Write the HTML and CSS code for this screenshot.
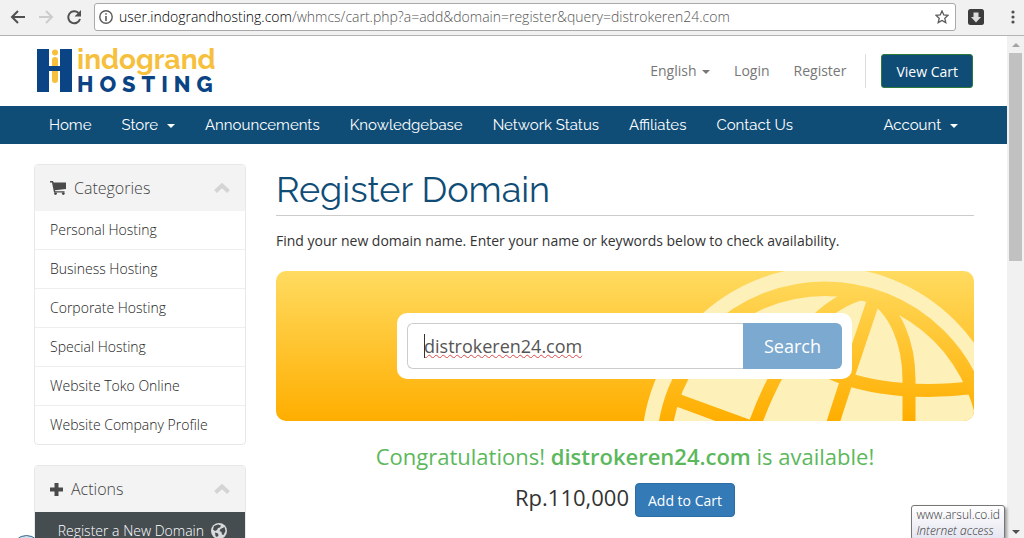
FILE: index.html
```html
<!DOCTYPE html>
<html lang="en">
<head>
    <meta charset="UTF-8">
    <meta name="viewport" content="width=device-width, initial-scale=1.0">
    <title>Register Domain - Indogrand Hosting</title>
    <link rel="stylesheet" href="styles.css">
</head>
<body>
<div class="toolbar">
    <button class="tool-button" aria-label="Back">
        <svg width="16" height="16" viewBox="0 0 16 16" fill="none" stroke="#505050" stroke-width="2"><path d="M15 8H2M8 2L2 8l6 6"/></svg>
    </button>
    <button class="tool-button" aria-label="Forward" disabled>
        <svg width="16" height="16" viewBox="0 0 16 16" fill="none" stroke="#cccccc" stroke-width="2"><path d="M1 8h13M8 2l6 6-6 6"/></svg>
    </button>
    <button class="tool-button" aria-label="Reload">
        <svg width="16" height="16" viewBox="0 0 16 16"><path d="M12.500 4A6 6 0 1 0 14 10" fill="none" stroke="#505050" stroke-width="2"/><path d="M15 1v6.500H8.500z" fill="#505050"/></svg>
    </button>
    <div class="address-bar">
        <svg width="14" height="14" viewBox="0 0 14 14"><circle cx="7" cy="7" r="6.200" fill="none" stroke="#5a5a5a" stroke-width="1.400"/><path d="M6.200 3.200h1.600v1.600H6.200zM6.200 6h1.600v5H6.200z" fill="#5a5a5a"/></svg>
        <div class="url" role="textbox" aria-label="Address" tabindex="0"><span class="url-host">user.indograndhosting.com</span>/whmcs/cart.php?a=add&amp;domain=register&amp;query=distrokeren24.com</div>
        <button class="star-button" aria-label="Bookmark">
            <svg width="14" height="14" viewBox="0 0 14 14" fill="none" stroke="#5a5a5a" stroke-width="1.300"><path d="M7 1l1.800 4 4.200.4-3.200 2.900 1 4.300L7 10.400l-3.800 2.200 1-4.300L1 5.400 5.200 5z"/></svg>
        </button>
    </div>
    <button class="tool-button" aria-label="Downloads">
        <svg width="16" height="16" viewBox="0 0 16 16"><rect width="16" height="16" rx="2.500" fill="#3c3c3c"/><path d="M5.500 3.500h5V8H13l-5 5.500L3 8h2.500z" fill="#dcdcdc"/></svg>
    </button>
    <button class="tool-button menu-button" aria-label="Menu">
        <svg width="4" height="14" viewBox="0 0 4 14" fill="#505050"><circle cx="2" cy="2" r="1.600"/><circle cx="2" cy="7" r="1.600"/><circle cx="2" cy="12" r="1.600"/></svg>
    </button>
</div>

<div class="window">
    <div class="page">
        <header class="header">
            <a class="logo" href="#" aria-label="Indogrand Hosting">
                <svg width="184" height="50" viewBox="0 0 184 50">
                    <path d="M0 3h12v17h11V3h12v43H23V25H12v21H0z" fill="#0b4484"/>
                    <circle cx="18" cy="6.500" r="3" fill="#f6c03c"/>
                    <path d="M15 20v-6a3 3 0 0 1 6 0v6zM15 25h6v9a3 3 0 0 1-6 0z" fill="#f6c03c"/>
                    <text class="logo-top" x="40" y="23">indogrand</text>
                    <text class="logo-bottom" x="40" y="46">HOSTING</text>
                </svg>
            </a>
            <div class="top-links">
                <a href="#">English <span class="caret"></span></a>
                <a href="#">Login</a>
                <a href="#">Register</a>
                <div class="cart-box">
                    <button class="view-cart">View Cart</button>
                </div>
            </div>
        </header>

        <nav class="navbar">
            <a href="#">Home</a>
            <a href="#">Store <span class="caret"></span></a>
            <a href="#">Announcements</a>
            <a href="#">Knowledgebase</a>
            <a href="#">Network Status</a>
            <a href="#">Affiliates</a>
            <a href="#">Contact Us</a>
            <a class="account" href="#">Account <span class="caret"></span></a>
        </nav>

        <div class="content">
            <aside class="sidebar">
                <section class="panel">
                    <h3 class="panel-heading">
                        <svg width="16" height="14" viewBox="0 0 16 14" fill="#4a4a4a"><path d="M0 0h3l.6 1.500H16V8L5 9.300l.2 1H14.500v1.200H4L2 1.500H0z"/><circle cx="5.500" cy="12.600" r="1.400"/><circle cx="13.300" cy="12.600" r="1.400"/></svg>
                        Categories
                        <svg class="chevron" width="16" height="10" viewBox="0 0 16 10" fill="none" stroke="#d4d4d4" stroke-width="4"><path d="M1.500 8.500L8 2.500l6.500 6"/></svg>
                    </h3>
                    <ul class="panel-list">
                        <li><a href="#">Personal Hosting</a></li>
                        <li><a href="#">Business Hosting</a></li>
                        <li><a href="#">Corporate Hosting</a></li>
                        <li><a href="#">Special Hosting</a></li>
                        <li><a href="#">Website Toko Online</a></li>
                        <li><a href="#">Website Company Profile</a></li>
                    </ul>
                </section>
                <section class="panel">
                    <h3 class="panel-heading">
                        <svg width="13" height="13" viewBox="0 0 13 13" fill="#4a4a4a"><path d="M4.500 0h4v4.500H13v4H8.500V13h-4V8.500H0v-4h4.500z"/></svg>
                        Actions
                        <svg class="chevron" width="16" height="10" viewBox="0 0 16 10" fill="none" stroke="#d4d4d4" stroke-width="4"><path d="M1.500 8.500L8 2.500l6.500 6"/></svg>
                    </h3>
                    <a class="action" href="#">
                        Register a New Domain
                        <svg width="16" height="16" viewBox="0 0 16 16"><circle cx="8" cy="8" r="8" fill="#d8dadb"/><path d="M3 3l4-1.500 3 1-1 2-2 .5-1 2-2 1-2-1.500zM9.500 6l4-2 1 4-2 4-1.500-.5-.5-2.500-2-1zM4 9.500l3 1 .5 2L6 14l-1.500-1z" fill="#454d51"/></svg>
                    </a>
                </section>
            </aside>

            <main class="main">
                <h1>Register Domain</h1>
                <p class="lead">Find your new domain name. Enter your name or keywords below to check availability.</p>

                <div class="banner">
                    <svg class="globe" width="331" height="150" viewBox="643 271 331 150" aria-hidden="true">
                        <mask id="grid">
                            <rect x="643" y="271" width="331" height="150" fill="#fff"/>
                            <g fill="none" stroke="#000" stroke-width="13">
                                <path d="M877 290C862 335 848 375 832 426"/>
                                <path d="M866 292C897 308 909 345 909 380V426"/>
                                <path d="M815 364C845 384 905 398 985 386"/>
                                <path d="M868 292C825 300 784 345 755 424"/>
                                <path d="M669 397L770 434"/>
                            </g>
                        </mask>
                        <circle cx="825" cy="450" r="176" fill="none" stroke="#fdf0b8" stroke-width="15"/>
                        <circle cx="825" cy="450" r="154" fill="#fdf0b8" mask="url(#grid)"/>
                    </svg>
                    <form class="search-box">
                        <div class="search-field">
                            <input class="search-input" type="text" aria-label="Domain name" value="distrokeren24.com" spellcheck="false">
                        </div>
                        <button class="search-button" type="button">Search</button>
                    </form>
                </div>

                <p class="available">Congratulations! <strong>distrokeren24.com</strong> is available!</p>
                <div class="price-row">
                    <span class="price">Rp.110,000</span>
                    <button class="add-button">Add to Cart</button>
                </div>
            </main>
        </div>
    </div>

    <div class="scrollbar" aria-hidden="true">
        <span class="arrow-up"></span>
        <span class="thumb"></span>
        <span class="arrow-down"></span>
    </div>
</div>

<div class="corner-circle"></div>
<div class="tooltip">www.arsul.co.id<br><em>Internet access</em></div>
</body>
</html>
```
FILE: styles.css
```css
* {
    box-sizing: border-box;
}

body {
    margin: 0;
    height: 100vh;
    display: flex;
    flex-direction: column;
    overflow: hidden;
    position: relative;
    font-family: "Open Sans", "Noto Sans", sans-serif;
    font-size: 14px;
    line-height: 20px;
    color: #333;
    background-color: #fff;
}

a {
    color: inherit;
    text-decoration: none;
}

button {
    font-family: inherit;
    font-size: 14px;
    cursor: pointer;
}

svg {
    display: block;
    flex-shrink: 0;
}

/* browser toolbar */
.toolbar {
    display: flex;
    align-items: center;
    gap: 12px;
    height: 36px;
    flex-shrink: 0;
    padding: 0 7px 2px 10px;
    background-color: #f1f1f1;
    border-bottom: 1px solid #b4b4b4;
}

.tool-button,
.star-button {
    padding: 0;
    border: 0;
    background: none;
}

.menu-button {
    padding: 0 2px 0 15px;
}

.address-bar {
    flex: 1;
    display: flex;
    align-items: center;
    gap: 6px;
    height: 28px;
    min-width: 0;
    padding: 0 6px 0 4px;
    background-color: #fff;
    border: 1px solid #a9a9a9;
    border-radius: 3px;
}

.url {
    flex: 1;
    overflow: hidden;
    white-space: nowrap;
    color: #555;
    font-size: 14px;
    font-weight: 300;
}

.url-host {
    color: #000;
}

.window {
    flex: 1;
    display: flex;
    min-height: 0;
}

.page {
    flex: 1;
    min-width: 0;
    overflow: hidden;
}

/* header */
.header {
    display: flex;
    align-items: center;
    justify-content: space-between;
    height: 70px;
    padding: 0 34px 0 37px;
}

.logo-top {
    font: 700 28px Raleway, Lato, sans-serif;
    fill: #f6c03c;
}

.logo-bottom {
    font: 800 22px Raleway, Lato, sans-serif;
    letter-spacing: 6px;
    fill: #0b4484;
}

.top-links {
    display: flex;
    align-items: center;
    gap: 24px;
    color: #777;
}

.cart-box {
    display: flex;
    margin-left: -5px;
    padding-left: 15px;
    border-left: 1px solid #ddd;
}

.view-cart {
    height: 34px;
    padding: 0 14px;
    color: #fff;
    font-weight: 500;
    background-color: #0f4d77;
    border: 1px solid #2b7a3c;
    border-radius: 3px;
}

.caret {
    display: inline-block;
    margin-left: 2px;
    vertical-align: middle;
    border-top: 4px solid;
    border-left: 4px solid transparent;
    border-right: 4px solid transparent;
}

.navbar {
    display: flex;
    align-items: center;
    gap: 30px;
    height: 38px;
    padding: 0 49px;
    color: #fff;
    background-color: #0f4d77;
    font-family: Raleway, Lato, sans-serif;
    font-size: 15px;
    white-space: nowrap;
}

.navbar .caret {
    margin-left: 5px;
}

.account {
    margin-left: auto;
}

/* content */
.content {
    display: flex;
    gap: 30px;
    padding: 20px 33px 0 34px;
}

.sidebar {
    width: 212px;
    flex-shrink: 0;
}

.panel {
    margin-bottom: 20px;
    border: 1px solid #e8e8e8;
    border-radius: 4px;
    overflow: hidden;
}

.panel-heading {
    display: flex;
    align-items: center;
    gap: 8px;
    height: 46px;
    margin: 0;
    padding: 0 15px;
    background-color: #f3f3f3;
    color: #444;
    font-size: 16px;
    font-weight: 300;
}

.chevron {
    margin-left: auto;
}

.panel-list {
    margin: 0;
    padding: 0;
    list-style: none;
}

.panel-list a {
    display: block;
    padding: 9px 15px;
    color: #222;
    font-weight: 300;
}

.panel-list li + li {
    border-top: 1px solid #eee;
}

.action {
    display: flex;
    align-items: center;
    justify-content: flex-end;
    gap: 7px;
    height: 38px;
    padding: 0 18px;
    color: #fff;
    background-color: #454d51;
    font-weight: 300;
    white-space: nowrap;
}

.main {
    flex: 1;
    min-width: 0;
}

h1 {
    margin: 0 0 15px;
    padding-bottom: 1px;
    border-bottom: 1px solid #ccc;
    color: #0f4d77;
    font-family: Raleway, Lato, sans-serif;
    font-size: 36px;
    font-weight: 400;
    line-height: 50px;
}

.lead {
    margin: 0 0 20px;
}

.banner {
    position: relative;
    display: flex;
    justify-content: center;
    padding: 42px 122px 42px 121px;
    border-radius: 10px;
    background: linear-gradient(#ffdb60, #ffae00);
    overflow: hidden;
}

.globe {
    position: absolute;
    top: 0;
    right: 0;
}

.search-box {
    position: relative;
    flex: 1;
    display: flex;
    padding: 10px;
    background-color: #fff;
    border-radius: 10px;
}

.search-field {
    position: relative;
    flex: 1;
    display: flex;
}

/* text cursor at the start of the field */
.search-field::before {
    content: "";
    position: absolute;
    left: 17px;
    top: 11px;
    width: 1px;
    height: 24px;
    background-color: #333;
}

.search-input {
    width: 100%;
    height: 46px;
    padding: 0 16px;
    border: 1px solid #ccc;
    border-right: 0;
    border-radius: 6px 0 0 6px;
    outline: none;
    color: #555;
    font-family: inherit;
    font-size: 18px;
    text-decoration: underline wavy #e04848 1px;
}

.search-button {
    width: 99px;
    border: 0;
    border-radius: 0 6px 6px 0;
    background-color: #7ba9d0;
    color: #fff;
    font-size: 18px;
}

.available {
    margin: 19px 0 11px;
    color: #5cb85c;
    font-size: 22px;
    line-height: 32px;
    text-align: center;
}

.available strong {
    font-weight: 600;
}

.price-row {
    display: flex;
    align-items: baseline;
    justify-content: center;
    gap: 6px;
}

.price {
    font-size: 22px;
}

.add-button {
    height: 34px;
    padding: 0 12px;
    color: #fff;
    background-color: #337ab7;
    border: 1px solid #2e6da4;
    border-radius: 4px;
}

/* scrollbar */
.scrollbar {
    display: flex;
    flex-direction: column;
    align-items: center;
    gap: 6px;
    width: 17px;
    padding: 7px 0 4px;
    background-color: #f1f1f1;
}

.arrow-up,
.arrow-down {
    border-left: 4px solid transparent;
    border-right: 4px solid transparent;
}

.arrow-up {
    border-bottom: 4px solid #a3a3a3;
}

.arrow-down {
    margin-top: auto;
    border-top: 4px solid #505050;
}

.thumb {
    width: 13px;
    height: 208px;
    background-color: #c1c1c1;
}

/* overlays at the bottom of the window */
.tooltip {
    position: absolute;
    right: 19px;
    bottom: -2px;
    padding: 1px 4px 0;
    color: #333;
    font-size: 12px;
    font-weight: 300;
    line-height: 16px;
    background: linear-gradient(#fff, #e4e5f0);
    border: 1px solid #767676;
    border-radius: 3px;
    box-shadow: 2px 2px 3px rgba(0, 0, 0, 0.4);
}

.corner-circle {
    position: absolute;
    left: 12px;
    bottom: -26px;
    width: 29px;
    height: 29px;
    border: 1px solid #35628c;
    border-radius: 50%;
    background-color: #c9e0ee;
}
```
